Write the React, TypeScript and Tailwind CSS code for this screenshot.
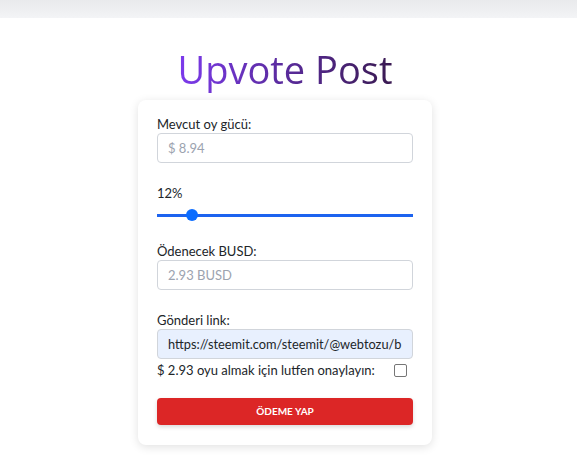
import { useState } from "react";

export default function App() {
    const [percent, setPercent] = useState(12);
    const [checked, setChecked] = useState(false);

    return (
        <div className="min-h-[464px] bg-white font-['Lato',sans-serif] text-[#212529]">
            <div className="h-[18px] bg-gradient-to-b from-[#e9eaec] to-[#f3f4f6]" />
            <div className="flex flex-col items-center pr-[7px]">
                <h1 className="mt-[26px] font-['Open_Sans',sans-serif] text-[38px] leading-[50px] font-normal bg-gradient-to-r from-[#7c3aed] to-[#3a1a52] bg-clip-text text-transparent">
                    Upvote Post
                </h1>
                <div className="mt-[6px] w-[294px] rounded-lg bg-white px-[19px] pt-[16px] pb-[20px] shadow-[0_2px_10px_rgba(0,0,0,0.12)]">
                    <label className="block text-[13px] leading-[16px]">Mevcut oy gücü:</label>
                    <input
                        readOnly
                        placeholder="$ 8.94"
                        className="mt-[1px] block h-[30px] w-full rounded border border-[#d1d5db] px-[10px] text-[13px] placeholder:text-[#9ca3af] outline-none"
                    />
                    <div className="mt-[22px] text-[13px] leading-[16px]">{percent}%</div>
                    <div className="relative mt-[6px] h-[16px]">
                        <input
                            type="range"
                            min={0}
                            max={100}
                            value={percent}
                            onChange={(e) => setPercent(Number(e.target.value))}
                            className="absolute inset-0 h-[16px] w-full cursor-pointer appearance-none bg-transparent
                                [&::-webkit-slider-runnable-track]:h-[3px] [&::-webkit-slider-runnable-track]:bg-[#1d63ef]
                                [&::-webkit-slider-thumb]:mt-[-4.5px] [&::-webkit-slider-thumb]:h-[12px] [&::-webkit-slider-thumb]:w-[12px] [&::-webkit-slider-thumb]:appearance-none [&::-webkit-slider-thumb]:rounded-full [&::-webkit-slider-thumb]:bg-[#0b6cff]"
                        />
                    </div>
                    <label className="mt-[20px] block text-[13px] leading-[16px]">Ödenecek BUSD:</label>
                    <input
                        readOnly
                        placeholder="2.93 BUSD"
                        className="mt-[1px] block h-[30px] w-full rounded border border-[#d1d5db] px-[10px] text-[13px] placeholder:text-[#9ca3af] outline-none"
                    />
                    <label className="mt-[22px] block text-[13px] leading-[16px]">Gönderi link:</label>
                    <input
                        readOnly
                        value="https://steemit.com/steemit/@webtozu/b"
                        className="mt-[1px] block h-[30px] w-full rounded border border-[#d1d5db] bg-[#e8f0fe] pl-[10px] pr-[2px] text-[12.8px] text-[#212529] outline-none"
                    />
                    <div className="mt-[2px] flex h-[18px] items-center justify-between text-[13px] leading-[16px]">
                        <span>$ 2.93 oyu almak için lutfen onaylayın:</span>
                        <input
                            type="checkbox"
                            checked={checked}
                            onChange={(e) => setChecked(e.target.checked)}
                            className="mr-[6px] h-[13px] w-[13px] appearance-none rounded-[2px] border border-[#767676] bg-white"
                        />
                    </div>
                    <button
                        type="button"
                        className="mt-[19px] block h-[27px] w-full rounded bg-[#dc2626] text-[10px] font-bold text-white shadow-[0_2px_4px_rgba(0,0,0,0.15)]"
                    >
                        ÖDEME YAP
                    </button>
                </div>
            </div>
        </div>
    );
}
